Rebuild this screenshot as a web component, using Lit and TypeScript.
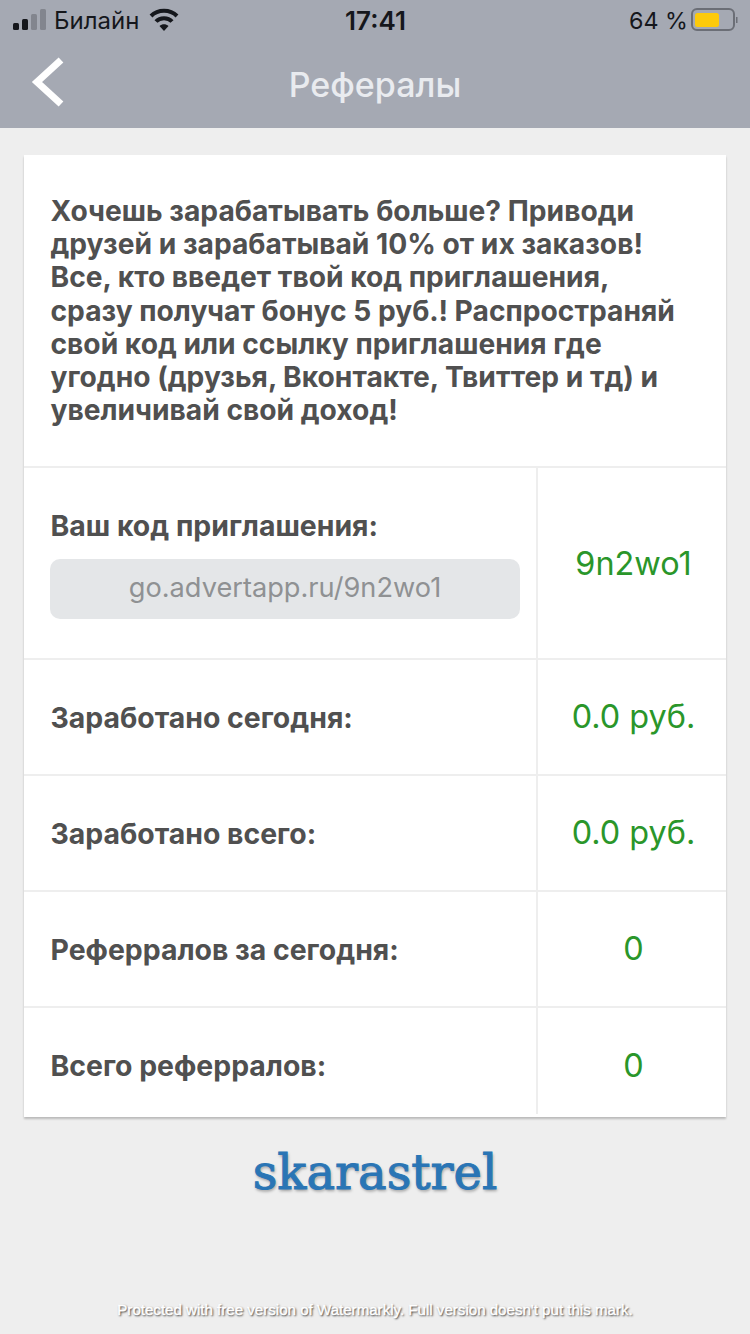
import {LitElement, css, html} from 'lit';
import {customElement} from 'lit/decorators.js';

const stats = [
    {label: 'Заработано сегодня:', value: '0.0 руб.'},
    {label: 'Заработано всего:', value: '0.0 руб.'},
    {label: 'Реферралов за сегодня:', value: '0'},
    {label: 'Всего реферралов:', value: '0'},
];

@customElement('app-root')
export class AppRoot extends LitElement {
    static styles = css`
        :host {
            display: block;
            width: 750px;
            height: 1334px;
            overflow: hidden;
            background: #eeeeee;
            font-family: Inter, "Noto Sans", sans-serif;
            color: #505050;
        }

        .top {
            height: 128px;
            background: #a5a9b3;
            display: flex;
            flex-direction: column;
        }

        .status {
            height: 42px;
            display: grid;
            grid-template-columns: 1fr auto 1fr;
            align-items: center;
            color: #15171c;
            font-size: 24px;
            padding: 0 11px 2px 13px;
            box-sizing: border-box;
        }

        .status-left, .status-right {
            display: flex;
            align-items: center;
        }

        .status-left { gap: 8px; }

        .status-left .wifi { margin-left: 2px; }

        .status-right {
            justify-content: flex-end;
            gap: 3px;
        }

        .status-right span { font-size: 23.3px; }

        .time {
            font-size: 26px;
            font-weight: 600;
            margin-left: -1px;
        }

        .nav {
            flex: 1;
            display: flex;
            align-items: center;
            justify-content: center;
            position: relative;
            padding-bottom: 1px;
        }

        .nav h1 {
            margin: 0;
            font-size: 34px;
            font-weight: 500;
            color: #e9ebef;
        }

        .back {
            position: absolute;
            left: 30px;
            top: 14px;
        }

        .card {
            margin: 27px 24px 0;
            background: #fff;
            box-shadow: 0 2px 2px rgba(0,0,0,0.22);
            height: 962px;
            display: flex;
            flex-direction: column;
        }

        .intro {
            height: 313px;
            box-sizing: border-box;
            padding: 40px 38px 0 26.5px;
            margin: 0;
            font-size: 28.2px;
            line-height: 33.2px;
            font-weight: 700;
            border-bottom: 2px solid #eeeeee;
        }

        .row {
            display: flex;
            height: 116px;
            border-bottom: 2px solid #eeeeee;
            box-sizing: border-box;
        }

        .row.code { height: 192px; }

        .row:last-child {
            border-bottom: none;
            height: 109px;
        }

        .label {
            width: 514px;
            box-sizing: border-box;
            padding: 0 16px 0 26.5px;
            display: flex;
            flex-direction: column;
            justify-content: center;
            font-size: 28.4px;
            font-weight: 700;
            border-right: 2px solid #eeeeee;
        }

        .row:last-child .label {
            margin-bottom: 3px;
            padding-top: 9px;
        }

        .link {
            margin: 16px 0 0 -0.5px;
            height: 60px;
            border-radius: 10px;
            background: #e4e6e8;
            color: #8f9193;
            font-size: 27.2px;
            font-weight: 400;
            display: flex;
            align-items: center;
            justify-content: center;
            box-sizing: border-box;
            padding-bottom: 2px;
        }

        .value {
            flex: 1;
            display: flex;
            align-items: center;
            justify-content: center;
            color: #2a962a;
            font-size: 32.4px;
            padding: 0 0 2px 3px;
        }

        .row.code .value { padding-bottom: 0; }

        .row:last-child .value { padding-top: 8px; }

        .brand {
            margin-top: 25px;
            text-align: center;
            font-family: "DejaVu Serif", "Liberation Serif", serif;
            font-size: 48px;
            line-height: 60px;
            color: #2a75b5;
            -webkit-text-stroke: 1px #2a75b5;
            text-shadow: 1px 2px 3px rgba(0,0,0,0.35);
        }

        .mark {
            margin-top: 99px;
            text-align: center;
            font-family: "Liberation Sans", sans-serif;
            font-size: 15.1px;
            color: #fff;
            -webkit-text-stroke: 0.4px #fff;
            text-shadow: 1px 1px 2px rgba(0,0,0,0.9);
        }
    `;

    render() {
        return html`
            <div class="top">
                <div class="status">
                    <div class="status-left">
                        <svg width="33" height="24" viewBox="0 0 33 24">
                            <rect x="0" y="15" width="6" height="7" rx="1.5" fill="#15171c"/>
                            <rect x="9" y="11" width="6" height="11" rx="1.5" fill="#15171c"/>
                            <rect x="18" y="6" width="6" height="16" rx="1.5" fill="#82858e"/>
                            <rect x="27" y="1" width="6" height="21" rx="1.5" fill="#82858e"/>
                        </svg>
                        <span>Билайн</span>
                        <svg class="wifi" width="30" height="24" viewBox="0 0 30 24" fill="none" stroke="#15171c" stroke-width="4">
                            <path d="M2 8 C 9 1, 21 1, 28 8"/>
                            <path d="M7 13.5 C 11 9, 19 9, 23 13.5"/>
                            <path d="M15 23 L10.5 18 C 13 15.5, 17 15.5, 19.5 18 Z" fill="#15171c" stroke="none"/>
                        </svg>
                    </div>
                    <div class="time">17:41</div>
                    <div class="status-right">
                        <span>64 %</span>
                        <svg width="48" height="24" viewBox="0 0 48 24" fill="none">
                            <rect x="1" y="1" width="42" height="21" rx="5" stroke="#6b6e76" stroke-width="2"/>
                            <rect x="4" y="5" width="24" height="14" rx="2.5" fill="#fdca0b"/>
                            <rect x="45" y="9" width="1.5" height="6" fill="#6b6e76"/>
                        </svg>
                    </div>
                </div>
                <div class="nav">
                    <svg class="back" width="36" height="52" viewBox="0 0 36 52" fill="none">
                        <path d="M31 4 L7 26 L31 48" stroke="#fff" stroke-width="7"/>
                    </svg>
                    <h1>Рефералы</h1>
                </div>
            </div>

            <div class="card">
                <p class="intro">Хочешь зарабатывать больше? Приводи друзей и зарабатывай 10% от их заказов! Все, кто введет твой код приглашения, сразу получат бонус 5 руб.! Распространяй свой код или ссылку приглашения где угодно (друзья, Вконтакте, Твиттер и тд) и увеличивай свой доход!</p>

                <div class="row code">
                    <div class="label">
                        <div>Ваш код приглашения:</div>
                        <div class="link">go.advertapp.ru/9n2wo1</div>
                    </div>
                    <div class="value">9n2wo1</div>
                </div>

                ${stats.map(s => html`
                    <div class="row">
                        <div class="label">${s.label}</div>
                        <div class="value">${s.value}</div>
                    </div>
                `)}
            </div>

            <div class="brand">skarastrel</div>
            <div class="mark">Protected with free version of Watermarkly. Full version doesn't put this mark.</div>
        `;
    }
}
